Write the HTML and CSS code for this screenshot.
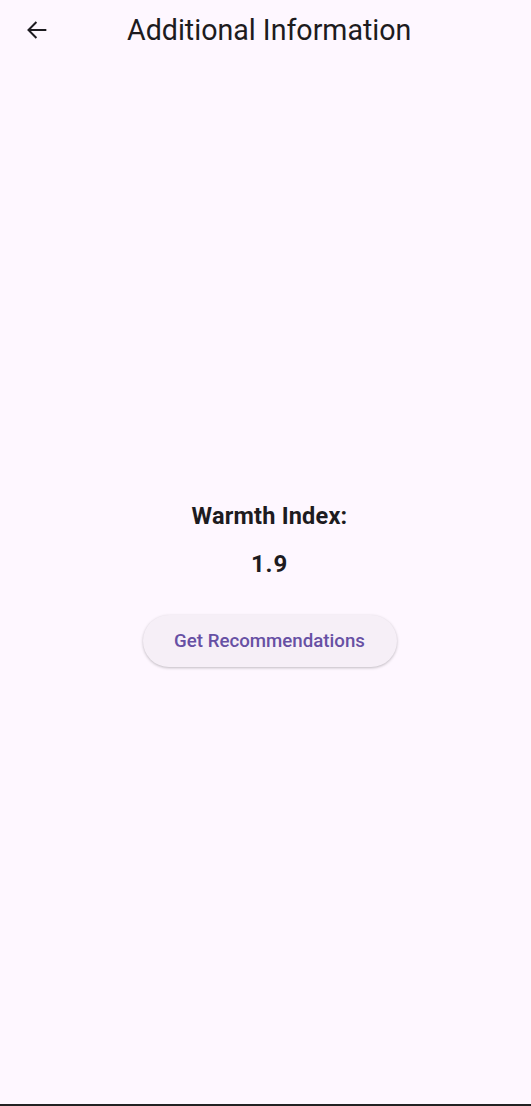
FILE: index.html
```html
<!DOCTYPE html>
<html>
<head>
<meta charset="utf-8">
<link rel="stylesheet" href="styles.css">
</head>
<body>
<div class="screen">
  <header class="appbar">
    <button class="back" aria-label="Back">
      <svg width="24" height="24" viewBox="0 0 24 24"><path d="M20 12H4.6M11.5 5.2L4.7 12l6.8 6.8" fill="none" stroke="#1d1b20" stroke-width="1.7"/></svg>
    </button>
    <h1 class="title">Additional Information</h1>
  </header>
  <main class="content">
    <div class="label">Warmth Index:</div>
    <div class="value">1.9</div>
    <button class="cta">Get Recommendations</button>
  </main>
  <div class="navline"></div>
</div>
</body>
</html>
```
FILE: styles.css
```css
html, body {
  margin: 0;
  padding: 0;
  background: #fef7ff;
}
.screen {
  width: 531px;
  height: 1106px;
  display: flex;
  flex-direction: column;
  font-family: Roboto, "Noto Sans", sans-serif;
  color: #1d1b20;
}
.appbar {
  height: 60px;
  display: flex;
  align-items: center;
  padding-left: 20px;
}
.back {
  width: 34px;
  height: 34px;
  border: none;
  background: none;
  padding: 0;
  display: flex;
  align-items: center;
  justify-content: center;
}
.back svg {
  width: 28px;
  height: 28px;
}
.title {
  margin: 0 0 0 73px;
  font-weight: 400;
  font-size: 28.6px;
  line-height: 34px;
  color: #1d1b20;
}
.content {
  flex: 1;
  display: flex;
  flex-direction: column;
  align-items: center;
  justify-content: center;
  padding-left: 8px;
  padding-top: 4px;
}
.label {
  font-weight: 700;
  font-size: 23.5px;
  line-height: 30px;
  letter-spacing: 0.2px;
}
.value {
  font-weight: 700;
  font-size: 24px;
  line-height: 30px;
  letter-spacing: 0.8px;
  margin-top: 18px;
}
.cta {
  margin-top: 36px;
  width: 254px;
  height: 52px;
  border: none;
  border-radius: 26px;
  background: #f6eff7;
  box-shadow: 0 1px 3px rgba(0,0,0,0.25);
  color: #6750a4;
  font-family: Roboto, "Noto Sans", sans-serif;
  font-weight: 500;
  font-size: 18.7px;
}
.navline {
  height: 2px;
  background: #222;
}
```
